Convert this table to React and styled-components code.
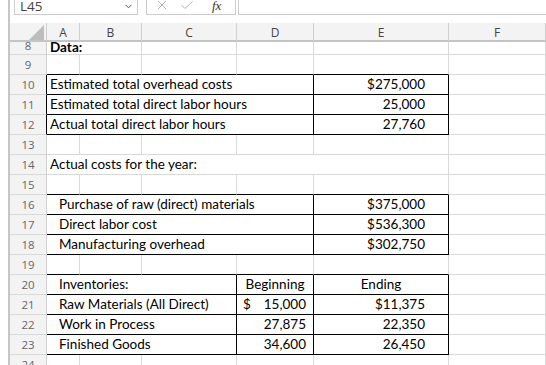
import React from 'react';
import styled, { createGlobalStyle } from 'styled-components';

const Global = createGlobalStyle`
  html, body { margin: 0; padding: 0; background: #fff; }
  body { font-family: Lato, "Liberation Sans", sans-serif; }
  * { box-sizing: border-box; }
`;

const COLS = '37px 33px 62px 95px 77px 135px 1fr';
const GRID = '#d9d9d9';
const HEAD_LINE = '#cfcfcf';
const BLACK = '#000';

const Page = styled.div`
  width: 546px;
  height: 365px;
  overflow: hidden;
  display: flex;
  background: #fff;
`;
const Gutter = styled.div`
  width: 8px;
  flex: none;
`;
const Stripe = styled.div`
  width: 2px;
  flex: none;
  background: #c6c6c6;
`;
const Main = styled.div`
  flex: 1;
  min-width: 0;
  display: flex;
  flex-direction: column;
  overflow: hidden;
`;

const FormulaBar = styled.div`
  height: 23px;
  flex: none;
  display: flex;
  align-items: flex-start;
  padding-left: 4px;
`;
const Box = styled.div`
  height: 15px;
  border: 1px solid #cdcdcd;
  border-top: none;
  background: #fff;
  display: flex;
  align-items: flex-end;
  flex: none;
  overflow: hidden;
`;
const NameBox = styled(Box)`
  width: 124px;
  padding: 0 5px 1px 5px;
  justify-content: space-between;
  font-family: "Open Sans", "Noto Sans", sans-serif;
  font-size: 13.5px;
  line-height: 14px;
  color: #444;
`;
const IconBox = styled(Box)`
  width: 90px;
  margin-left: 8px;
  padding: 0 0 2px 10px;
  gap: 14px;
`;
const FxText = styled.span`
  font-family: "Liberation Serif", serif;
  font-style: italic;
  font-size: 13px;
  line-height: 12px;
  color: #333;
  margin-left: 5px;
`;
const FormulaInput = styled(Box)`
  flex: 1;
  margin-left: 2px;
  border-right: none;
`;

const HeaderRow = styled.div`
  display: grid;
  grid-template-columns: ${COLS};
  height: 19px;
  flex: none;
  background: #f3f3f3;
  border-bottom: 2px solid #c4c4c4;
`;
const ColHead = styled.div`
  border-right: 1px solid ${HEAD_LINE};
  display: flex;
  align-items: center;
  justify-content: center;
  font-family: "Open Sans", "Noto Sans", sans-serif;
  font-size: 12px;
  color: #444;
  padding-top: 1px;
`;
const Corner = styled.div`
  border-right: 1px solid ${HEAD_LINE};
  display: flex;
  align-items: flex-end;
  justify-content: flex-end;
  padding: 0 2px 1px 0;
`;

const Body = styled.div`
  flex: 1;
  overflow: hidden;
  display: flex;
  flex-direction: column;
`;
const Row = styled.div`
  display: grid;
  grid-template-columns: ${COLS};
  height: 20px;
  flex: none;
  margin-top: ${(p) => (p.$cut ? '-7px' : '0')};
`;
const RowHead = styled.div`
  background: #f3f3f3;
  border-right: 1px solid ${(p) => (p.$edge ? BLACK : HEAD_LINE)};
  border-bottom: 1px solid ${GRID};
  display: flex;
  align-items: ${(p) => (p.$cut ? 'flex-end' : 'center')};
  justify-content: center;
  font-family: "Open Sans", "Noto Sans", sans-serif;
  font-size: 11.5px;
  line-height: 14px;
  color: #666;
  padding-top: 1px;
  padding-bottom: ${(p) => (p.$cut ? '1px' : '0')};
`;
const Cell = styled.div`
  grid-column: span ${(p) => p.$span || 1};
  border-right: 1px solid ${(p) => (p.$r === 'k' ? BLACK : GRID)};
  border-bottom: 1px solid ${(p) => (p.$b === 'k' ? BLACK : GRID)};
  display: flex;
  align-items: flex-end;
  justify-content: ${(p) =>
    p.$align === 'right' ? 'flex-end' : p.$align === 'center' ? 'center' : p.$align === 'split' ? 'space-between' : 'flex-start'};
  padding: 0 ${(p) => (p.$pr != null ? p.$pr : 3)}px ${(p) => (p.$low ? 0 : 2)}px ${(p) => (p.$pl != null ? p.$pl : 3)}px;
  font-size: 13.5px;
  line-height: ${(p) => (p.$low ? 13 : 16)}px;
  font-weight: ${(p) => (p.$bold ? 700 : 400)};
  color: #000;
  white-space: nowrap;
  overflow: hidden;
`;

const XIcon = () => (
  <svg width="10" height="10" viewBox="0 0 10 10" style={{ display: 'block', marginBottom: 2 }}>
    <path d="M1 1 L9 9 M9 1 L1 9" stroke="#b4b4b4" strokeWidth="1" fill="none" />
  </svg>
);
const CheckIcon = () => (
  <svg width="12" height="9" viewBox="0 0 12 9" style={{ display: 'block', marginBottom: 2 }}>
    <path d="M0.5 4 L4 7.5 L11.5 0.5" stroke="#b4b4b4" strokeWidth="1" fill="none" />
  </svg>
);
const Chevron = () => (
  <svg width="7" height="5" viewBox="0 0 7 5" style={{ display: 'block', marginBottom: 4 }}>
    <path d="M0.5 0.8 L3.5 3.8 L6.5 0.8" stroke="#555" strokeWidth="1" fill="none" />
  </svg>
);
const Triangle = () => (
  <svg width="15" height="15" viewBox="0 0 15 15" style={{ display: 'block' }}>
    <path d="M15 0 L15 15 L0 15 Z" fill="#bdbdbd" />
  </svg>
);

const g = (n = 1) => ({ span: n });
const rows = [
  { n: 8, cut: true, cells: [{ span: 2, text: 'Data:', bold: true, low: true }, g(), g(), g(), g()] },
  { n: 9, cells: [{ b: 'k' }, { b: 'k' }, { b: 'k' }, { b: 'k' }, { b: 'k' }, g()] },
  { n: 10, edge: true, cells: [{ span: 4, text: 'Estimated total overhead costs', r: 'k', b: 'k' }, { text: '$275,000', align: 'right', pr: 23, r: 'k', b: 'k' }, g()] },
  { n: 11, edge: true, cells: [{ span: 4, text: 'Estimated total direct labor hours', r: 'k', b: 'k' }, { text: '25,000', align: 'right', pr: 23, r: 'k', b: 'k' }, g()] },
  { n: 12, edge: true, cells: [{ span: 4, text: 'Actual total direct labor hours', r: 'k', b: 'k' }, { text: '27,760', align: 'right', pr: 23, r: 'k', b: 'k' }, g()] },
  { n: 13, cells: [g(), g(), g(), g(), g(), g()] },
  { n: 14, cells: [{ span: 5, text: 'Actual costs for the year:' }, g()] },
  { n: 15, cells: [{ b: 'k' }, { b: 'k' }, { b: 'k' }, { b: 'k' }, { b: 'k' }, g()] },
  { n: 16, cells: [{ span: 4, text: 'Purchase of raw (direct) materials', pl: 12, r: 'k', b: 'k' }, { text: '$375,000', align: 'right', pr: 23, r: 'k', b: 'k' }, g()] },
  { n: 17, cells: [{ span: 4, text: 'Direct labor cost', pl: 12, r: 'k', b: 'k' }, { text: '$536,300', align: 'right', pr: 23, r: 'k', b: 'k' }, g()] },
  { n: 18, cells: [{ span: 4, text: 'Manufacturing overhead', pl: 12, r: 'k', b: 'k' }, { text: '$302,750', align: 'right', pr: 23, r: 'k', b: 'k' }, g()] },
  { n: 19, cells: [{ b: 'k' }, { b: 'k' }, { b: 'k' }, { b: 'k' }, { b: 'k' }, g()] },
  { n: 20, cells: [{ span: 3, text: 'Inventories:', pl: 12, r: 'k', b: 'k' }, { text: 'Beginning', align: 'center', r: 'k', b: 'k' }, { text: 'Ending', align: 'center', r: 'k', b: 'k' }, g()] },
  { n: 21, cells: [{ span: 3, text: 'Raw Materials (All Direct)', pl: 12, r: 'k', b: 'k' }, { split: ['$', '15,000'], align: 'split', pl: 6, pr: 7, r: 'k', b: 'k' }, { text: '$11,375', align: 'right', pr: 23, r: 'k', b: 'k' }, g()] },
  { n: 22, cells: [{ span: 3, text: 'Work in Process', pl: 12, r: 'k', b: 'k' }, { text: '27,875', align: 'right', pr: 7, r: 'k', b: 'k' }, { text: '22,350', align: 'right', pr: 23, r: 'k', b: 'k' }, g()] },
  { n: 23, cells: [{ span: 3, text: 'Finished Goods', pl: 12, r: 'k', b: 'k' }, { text: '34,600', align: 'right', pr: 7, r: 'k', b: 'k' }, { text: '26,450', align: 'right', pr: 23, r: 'k', b: 'k' }, g()] },
  { n: 24, cells: [g(), g(), g(), g(), g(), g()] },
];

export default function App() {
  return (
    <>
      <Global />
      <Page>
        <Gutter />
        <Stripe />
        <Main>
          <FormulaBar>
            <NameBox>
              <span>L45</span>
              <Chevron />
            </NameBox>
            <IconBox>
              <XIcon />
              <CheckIcon />
              <FxText>fx</FxText>
            </IconBox>
            <FormulaInput />
          </FormulaBar>
          <HeaderRow>
            <Corner>
              <Triangle />
            </Corner>
            {['A', 'B', 'C', 'D', 'E', 'F'].map((c) => (
              <ColHead key={c}>{c}</ColHead>
            ))}
          </HeaderRow>
          <Body>
            {rows.map((row) => (
              <Row key={row.n} $cut={row.cut}>
                <RowHead $edge={row.edge} $cut={row.cut}>{row.n}</RowHead>
                {row.cells.map((c, i) => (
                  <Cell
                    key={i}
                    $span={c.span}
                    $r={c.r}
                    $b={c.b}
                    $align={c.align}
                    $pl={c.pl}
                    $pr={c.pr}
                    $bold={c.bold}
                    $low={c.low}
                  >
                    {c.split ? (
                      <>
                        <span>{c.split[0]}</span>
                        <span>{c.split[1]}</span>
                      </>
                    ) : (
                      c.text
                    )}
                  </Cell>
                ))}
              </Row>
            ))}
          </Body>
        </Main>
      </Page>
    </>
  );
}
